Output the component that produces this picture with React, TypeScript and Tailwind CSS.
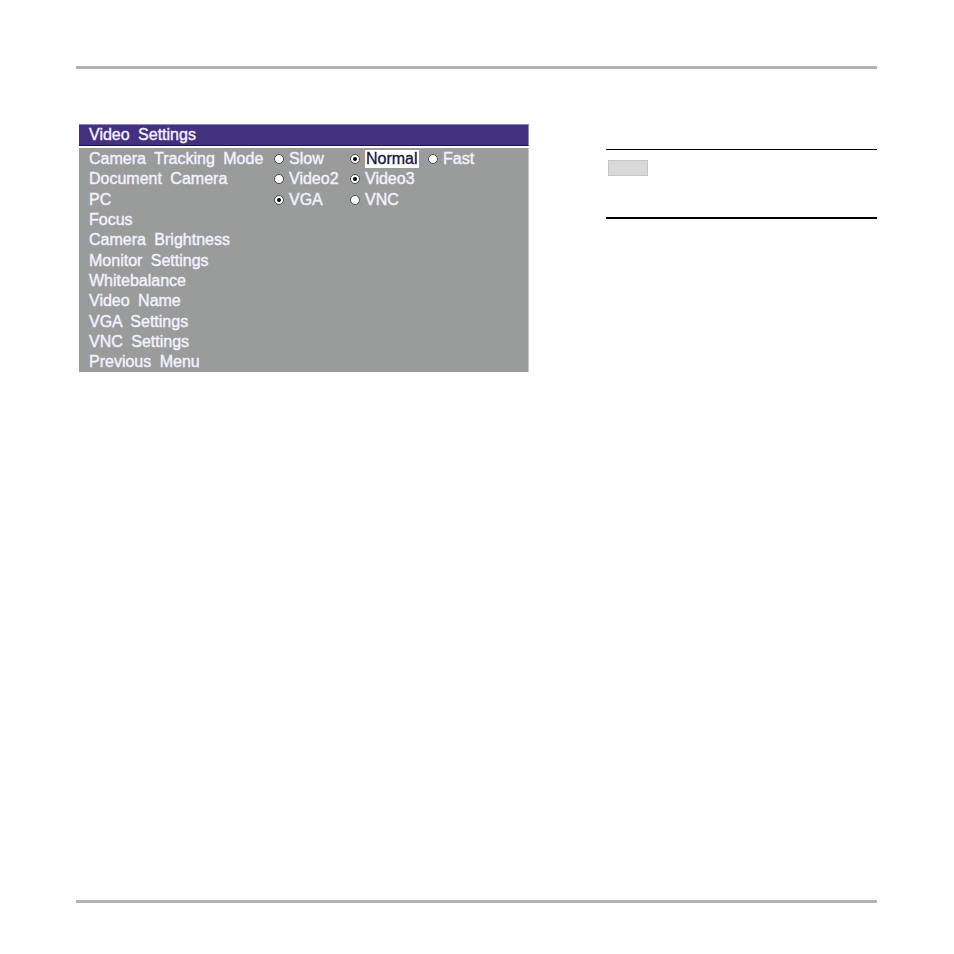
import React from 'react';

type Opt = { label: string; on?: boolean; focus?: boolean };
type Row = { label: string; opts?: Opt[] };

const rows: Row[] = [
  {
    label: 'Camera Tracking Mode',
    opts: [{ label: 'Slow' }, { label: 'Normal', on: true, focus: true }, { label: 'Fast' }],
  },
  { label: 'Document Camera', opts: [{ label: 'Video2' }, { label: 'Video3', on: true }] },
  { label: 'PC', opts: [{ label: 'VGA', on: true }, { label: 'VNC' }] },
  { label: 'Focus' },
  { label: 'Camera Brightness' },
  { label: 'Monitor Settings' },
  { label: 'Whitebalance' },
  { label: 'Video Name' },
  { label: 'VGA Settings' },
  { label: 'VNC Settings' },
  { label: 'Previous Menu' },
];

const Radio: React.FC<{ on?: boolean }> = ({ on }) => (
  <span className="flex h-[10px] w-[10px] shrink-0 items-center justify-center rounded-full border border-[#4a4a4a] bg-white">
    {on && <span className="h-[4px] w-[4px] rounded-full bg-black" />}
  </span>
);

const Option: React.FC<{ opt: Opt }> = ({ opt }) => (
  <div className="flex items-center gap-[5px]">
    <Radio on={opt.on} />
    <span
      className={
        opt.focus
          ? 'bg-white px-[1px] leading-[18px] text-[#15133a] [-webkit-text-stroke:0.3px_#15133a]'
          : ''
      }
    >
      {opt.label}
    </span>
  </div>
);

export default function App() {
  return (
    <div
      className="flex h-[954px] w-[954px] flex-col bg-white"
      style={{ fontFamily: '"Liberation Sans", Arial, sans-serif' }}
    >
      <div className="ml-[76px] mt-[66px] h-[3px] w-[801px] bg-[#b3b3b3]" />

      <div className="ml-[79px] mt-[55px] flex">
        <div className="w-[450px] bg-white">
          <div className="h-[22px] border-t border-r border-[#8e86bc] border-b border-b-[#1e0f52] bg-[#43307e] pl-[10px] text-[16px] leading-[20px] text-[#f4f1ff] [-webkit-text-stroke:0.4px_#f4f1ff] [word-spacing:4px]">
            Video Settings
          </div>
          <div className="mt-[2px] border-r border-[#c4c6c5] bg-[#9a9c9b] pl-[10px] pt-[1px] text-[16px] text-[#f4f1ff] [-webkit-text-stroke:0.4px_#f4f1ff] [word-spacing:4px]">
            {rows.map((r) => (
              <div key={r.label} className="grid h-[20.3px] grid-cols-[185px_76px_78px_auto] items-center leading-[18px]">
                <span className="whitespace-nowrap">{r.label}</span>
                {r.opts?.map((o) => <Option key={o.label} opt={o} />)}
              </div>
            ))}
          </div>
        </div>

        <div className="ml-[77px] w-[271px]">
          <div className="mt-[25px] h-px bg-black" />
          <div className="ml-[2px] mt-[10px] h-[16px] w-[40px] border border-[#c6c6c6] bg-[#d9d9d9]" />
          <div className="mt-[41px] h-[2px] bg-black" />
        </div>
      </div>

      <div className="mb-[51px] ml-[76px] mt-auto h-[3px] w-[801px] bg-[#b3b3b3]" />
    </div>
  );
}
